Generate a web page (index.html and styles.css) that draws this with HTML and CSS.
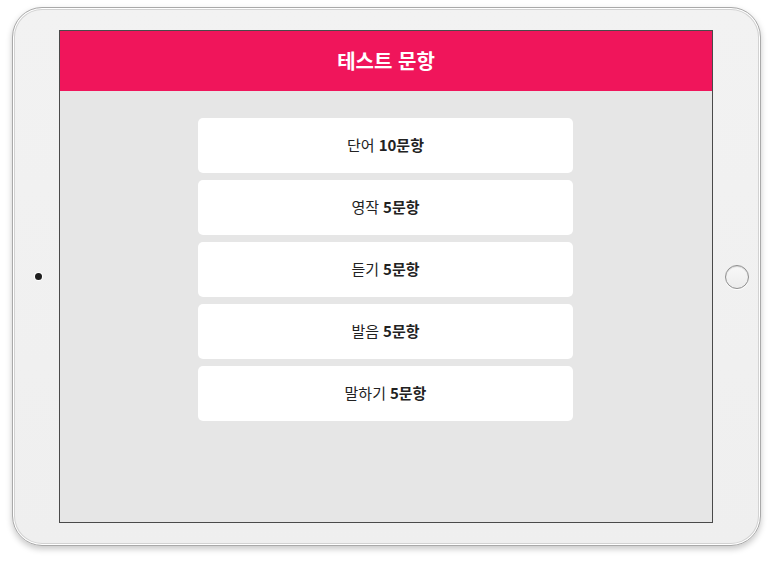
FILE: index.html
```html
<!DOCTYPE html>
<html lang="ko">
<head>
<meta charset="utf-8">
<link rel="stylesheet" href="styles.css">
</head>
<body>
<div class="tablet">
  <div class="bezel bezel-left"><span class="camera"></span></div>
  <div class="screen">
    <header class="title-bar">테스트 문항</header>
    <main class="list">
      <div class="item">단어 <b>10문항</b></div>
      <div class="item">영작 <b>5문항</b></div>
      <div class="item">듣기 <b>5문항</b></div>
      <div class="item">발음 <b>5문항</b></div>
      <div class="item">말하기 <b>5문항</b></div>
    </main>
  </div>
  <div class="bezel bezel-right"><span class="home"></span></div>
</div>
</body>
</html>
```
FILE: styles.css
```css
html, body {
  margin: 0;
  padding: 0;
  background: #ffffff;
}
body {
  width: 772px;
  height: 562px;
  overflow: hidden;
  font-family: "Noto Sans CJK KR", "Noto Sans", sans-serif;
}
.tablet {
  margin: 7px 0 0 12px;
  width: 749px;
  height: 539px;
  box-sizing: border-box;
  border: 1px solid #a9a9a9;
  border-radius: 30px;
  background: linear-gradient(180deg, #f2f2f2 0%, #efefef 100%);
  box-shadow: inset 0 0 0 1px #ffffff, inset 0 0 0 2px #d2d2d2, 0 3px 6px rgba(0,0,0,0.22);
  display: flex;
  align-items: center;
}
.bezel {
  display: flex;
  align-items: center;
  justify-content: center;
  align-self: stretch;
}
.bezel-left {
  width: 46px;
}
.bezel-right {
  width: 47px;
}
.camera {
  width: 7px;
  height: 7px;
  border-radius: 50%;
  background: #1e1e1e;
  box-shadow: 0 0 0 1px #ffffff;
  margin-left: 4px;
}
.home {
  width: 22px;
  height: 22px;
  border-radius: 50%;
  border: 1px solid #8f8f8f;
  background: linear-gradient(180deg, #f8f8f8, #ececec);
  box-shadow: inset 0 1px 1px rgba(0,0,0,0.15), 0 1px 0 #ffffff;
}
.screen {
  width: 654px;
  height: 493px;
  box-sizing: border-box;
  border: 1px solid #4a4a4a;
  background: #e6e6e6;
  display: flex;
  flex-direction: column;
}
.title-bar {
  height: 60px;
  background: #f0155b;
  color: #ffffff;
  font-weight: 700;
  font-size: 20px;
  display: flex;
  align-items: center;
  justify-content: center;
  flex-shrink: 0;
  padding-bottom: 1px;
  box-sizing: border-box;
}
.list {
  display: flex;
  flex-direction: column;
  align-items: center;
  gap: 7px;
  padding-top: 27px;
}
.item {
  width: 375px;
  height: 55px;
  background: #ffffff;
  border-radius: 5px;
  display: flex;
  align-items: center;
  justify-content: center;
  font-size: 15px;
  color: #222222;
  gap: 4px;
  margin-left: -1px;
  padding-bottom: 2px;
  box-sizing: border-box;
}
.item b {
  font-weight: 700;
}
```
